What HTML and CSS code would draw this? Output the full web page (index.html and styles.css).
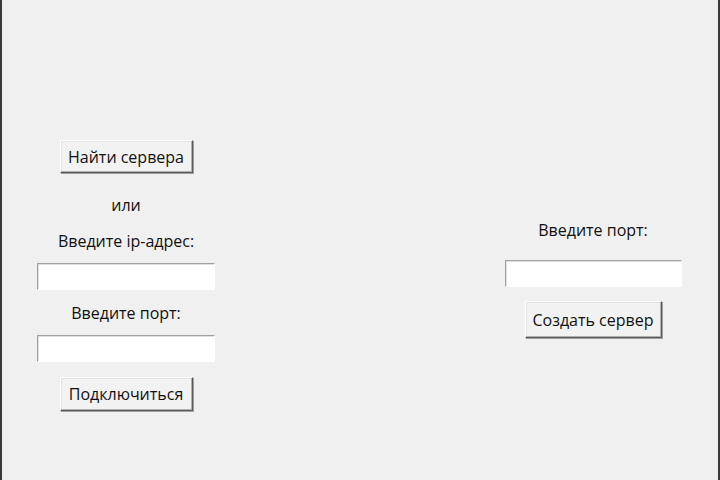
FILE: index.html
```html
<!DOCTYPE html>
<html lang="ru">
<head>
    <meta charset="UTF-8">
    <title>Сервер</title>
    <link rel="stylesheet" href="styles.css">
</head>
<body>
    <div class="window">
        <div class="panel panel-client">
            <button class="tk-btn btn-find">Найти сервера</button>
            <div class="label label-or">или</div>
            <div class="label label-ip">Введите ip-адрес:</div>
            <input class="tk-entry" type="text">
            <div class="label label-port">Введите порт:</div>
            <input class="tk-entry" type="text">
            <button class="tk-btn btn-connect">Подключиться</button>
        </div>

        <div class="panel panel-server">
            <div class="label">Введите порт:</div>
            <input class="tk-entry entry-server" type="text">
            <button class="tk-btn btn-create">Создать сервер</button>
        </div>
    </div>
</body>
</html>
```

FILE: styles.css
```css
body {
    margin: 0;
    font-family: 'Open Sans', 'Noto Sans', sans-serif;
    font-size: 16px;
    color: #111111;
    background: #f0f0f0;
}

.window {
    height: 480px;
    box-sizing: border-box;
    border-left: 2px solid #3a3a3a;
    border-right: 2px solid #3a3a3a;
    background: #f0f0f0;
    display: flex;
}

.panel {
    display: flex;
    flex-direction: column;
    align-items: center;
    width: 178px;
}

.panel-client {
    margin-left: 35px;
    padding-top: 140px;
}

.panel-server {
    margin-left: 289px;
    padding-top: 220px;
}

.label {
    line-height: 20px;
    height: 20px;
}

.label-or {
    margin-top: 22px;
}

.label-ip {
    margin-top: 16px;
}

.label-port {
    margin-top: 13px;
}

.tk-btn {
    font-family: inherit;
    font-size: 16px;
    color: #111111;
    background: #f2f2f2;
    height: 34px;
    padding: 0 4px;
    border: 1px solid;
    border-color: #ffffff #5a5a5a #5a5a5a #ffffff;
    box-shadow: 1px 1px 0 #a0a0a0, inset -1px -1px 0 #b0b0b0, inset 1px 1px 0 #e3e3e3;
}

.btn-find {
    width: 133px;
    height: 33px;
}

.btn-connect {
    width: 133px;
    margin-top: 15px;
}

.btn-create {
    width: 137px;
    height: 37px;
    margin-top: 14px;
}

.tk-entry {
    box-sizing: border-box;
    width: 178px;
    height: 27px;
    margin: 12px 0 0;
    padding: 0 3px;
    background: #ffffff;
    border: 1px solid;
    border-color: #a0a0a0 #ffffff #ffffff #a0a0a0;
    box-shadow: inset 1px 1px 0 #e0e0e0;
    font-family: inherit;
    font-size: 16px;
}

.entry-server {
    width: 177px;
    margin-top: 20px;
}
```
